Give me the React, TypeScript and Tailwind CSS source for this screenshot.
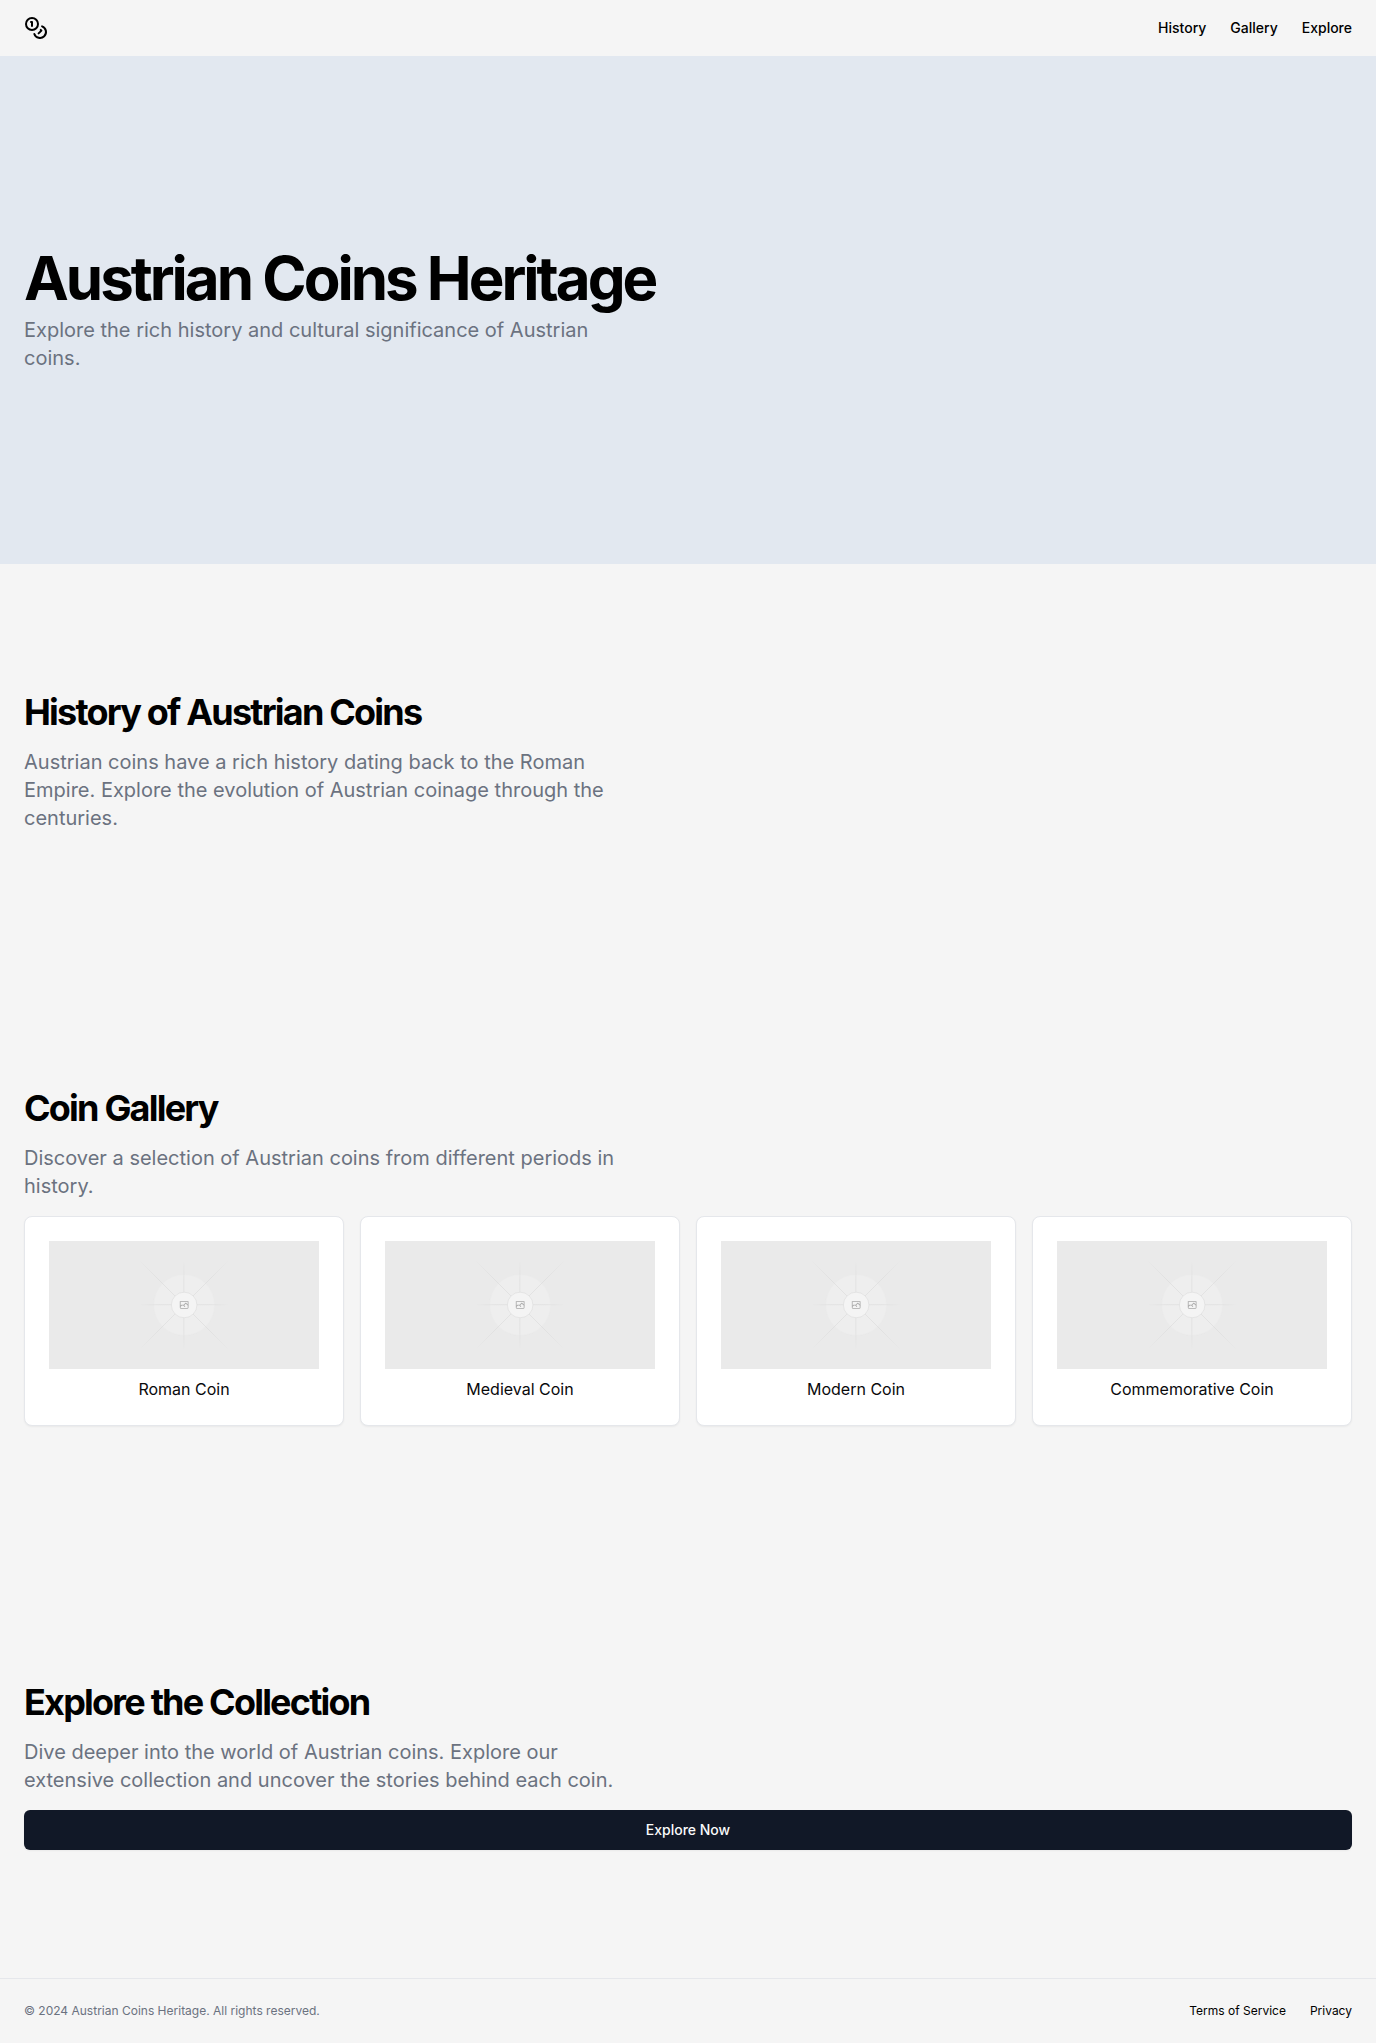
import type { ReactNode } from "react";

const coins = ["Roman Coin", "Medieval Coin", "Modern Coin", "Commemorative Coin"];

function CoinsIcon() {
  return (
    <svg
      className="size-6"
      viewBox="0 0 24 24"
      fill="none"
      stroke="currentColor"
      strokeWidth="2"
      strokeLinecap="round"
      strokeLinejoin="round"
      aria-hidden="true"
    >
      <circle cx="8" cy="8" r="6" />
      <path d="M18.09 10.37A6 6 0 1 1 10.34 18" />
      <path d="M7 6h1v4" />
      <path d="m16.71 13.88.7.71-2.82 2.82" />
    </svg>
  );
}

function Fade({ id, r }: { id: string; r: number }) {
  return (
    <radialGradient id={id} gradientUnits="userSpaceOnUse" cx="600" cy="600" r={r}>
      <stop offset="0.584" stopColor="#c9c9c9" />
      <stop offset="1" stopColor="#c9c9c9" stopOpacity="0" />
    </radialGradient>
  );
}

function Placeholder({ id, label }: { id: string; label: string }) {
  return (
    <svg
      className="h-32 w-full bg-[#eaeaea]"
      viewBox="0 0 1200 1200"
      preserveAspectRatio="xMidYMid slice"
      fill="none"
      role="img"
      aria-label={label}
    >
      <defs>
        <Fade id={`axis-${id}`} r={196} />
        <Fade id={`diagonal-${id}`} r={277} />
      </defs>
      <g opacity="0.5">
        <g opacity="0.5">
          <circle cx="600.7" cy="599.9" r="136.6" fill="#fafafa" />
          <circle cx="600.7" cy="599.9" r="135.4" stroke="#c9c9c9" strokeWidth="2.4" opacity="0.3" />
        </g>
        <g stroke={`url(#diagonal-${id})`} strokeWidth="2.4">
          <path d="M404 796 796 404" />
          <path d="M796 796 404 404" />
        </g>
        <g stroke={`url(#axis-${id})`} strokeWidth="2.4">
          <path d="M404 598.7h392" />
          <path d="M599.5 796V404" />
        </g>
        <circle cx="600.7" cy="599.9" r="56.8" fill="#fff" />
        <path
          fill="#666"
          fillRule="evenodd"
          clipRule="evenodd"
          d="M616.426 586.58h-31.434v16.176l3.553-3.554.531-.531h9.068l.074-.074 8.463-8.463h2.565l7.18 7.181V586.58Zm-15.715 14.654 3.698 3.699 1.283 1.282-2.565 2.565-1.282-1.283-5.2-5.199h-6.066l-5.514 5.514-.073.073v2.876a2.418 2.418 0 0 0 2.418 2.418h26.598a2.418 2.418 0 0 0 2.418-2.418v-8.317l-8.463-8.463-7.181 7.181-.071.072Zm-19.347 5.442v4.085a6.045 6.045 0 0 0 6.046 6.045h26.598a6.044 6.044 0 0 0 6.045-6.045v-7.108l1.356-1.355-1.282-1.283-.074-.073v-17.989h-38.689v23.43l-.146.146.146.147Z"
        />
        <circle cx="600.7" cy="599.9" r="56.8" stroke="#c9c9c9" strokeWidth="2.4" />
      </g>
    </svg>
  );
}

function Section({ id, title, text, children }: { id: string; title: string; text: string; children?: ReactNode }) {
  return (
    <section id={id} className="flex flex-col gap-4 px-6 py-32">
      <h2 className="text-4xl font-bold tracking-tighter">{title}</h2>
      <p className="max-w-[600px] text-xl text-[#6b7280]">{text}</p>
      {children}
    </section>
  );
}

export default function App() {
  return (
    <div className="flex min-h-screen flex-col bg-[#f5f5f5] font-['Inter',sans-serif] text-black">
      <header className="flex h-14 items-center justify-between px-6">
        <a href="#" aria-label="Austrian Coins Heritage">
          <CoinsIcon />
        </a>
        <nav className="flex gap-6 text-sm font-medium">
          <a href="#history">History</a>
          <a href="#gallery">Gallery</a>
          <a href="#explore">Explore</a>
        </nav>
      </header>
      <main className="flex-1">
        <section className="flex flex-col gap-2 bg-[#e2e8f0] px-6 py-48">
          <h1 className="text-6xl leading-none font-bold tracking-tighter">Austrian Coins Heritage</h1>
          <p className="max-w-[600px] text-xl text-[#6b7280]">
            Explore the rich history and cultural significance of Austrian coins.
          </p>
        </section>
        <Section
          id="history"
          title="History of Austrian Coins"
          text="Austrian coins have a rich history dating back to the Roman Empire. Explore the evolution of Austrian coinage through the centuries."
        />
        <Section
          id="gallery"
          title="Coin Gallery"
          text="Discover a selection of Austrian coins from different periods in history."
        >
          <div className="grid grid-cols-2 gap-4 md:grid-cols-4">
            {coins.map((coin, i) => (
              <article
                key={coin}
                className="flex flex-col gap-2 rounded-lg border border-[#e5e7eb] bg-white p-6 text-center text-[#09090b] shadow-xs"
              >
                <Placeholder id={String(i)} label={coin} />
                <h3>{coin}</h3>
              </article>
            ))}
          </div>
        </Section>
        <Section
          id="explore"
          title="Explore the Collection"
          text="Dive deeper into the world of Austrian coins. Explore our extensive collection and uncover the stories behind each coin."
        >
          <button type="button" className="h-10 rounded-md bg-[#111827] px-8 text-sm font-medium text-[#f9fafb] shadow-xs">
            Explore Now
          </button>
        </Section>
      </main>
      <footer className="flex items-center justify-between border-t border-[#e5e7eb] px-6 py-6 text-xs">
        <p className="text-[#6b7280]">© 2024 Austrian Coins Heritage. All rights reserved.</p>
        <nav className="flex gap-6">
          <a href="#terms">Terms of Service</a>
          <a href="#privacy">Privacy</a>
        </nav>
      </footer>
    </div>
  );
}
